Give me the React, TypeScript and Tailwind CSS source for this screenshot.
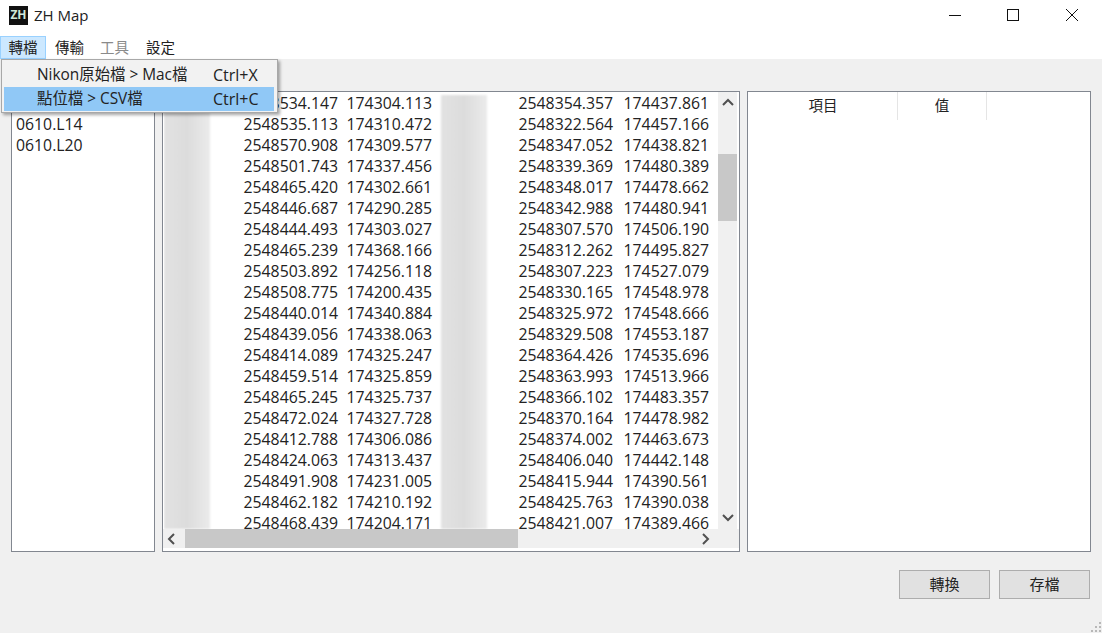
import React from "react";

const font = { fontFamily: '"Open Sans", "Noto Sans CJK TC", sans-serif' };

// 點位資料 (左右兩組座標)
const rows: string[][] = [
  ["2548534.147", "174304.113", "2548354.357", "174437.861"],
  ["2548535.113", "174310.472", "2548322.564", "174457.166"],
  ["2548570.908", "174309.577", "2548347.052", "174438.821"],
  ["2548501.743", "174337.456", "2548339.369", "174480.389"],
  ["2548465.420", "174302.661", "2548348.017", "174478.662"],
  ["2548446.687", "174290.285", "2548342.988", "174480.941"],
  ["2548444.493", "174303.027", "2548307.570", "174506.190"],
  ["2548465.239", "174368.166", "2548312.262", "174495.827"],
  ["2548503.892", "174256.118", "2548307.223", "174527.079"],
  ["2548508.775", "174200.435", "2548330.165", "174548.978"],
  ["2548440.014", "174340.884", "2548325.972", "174548.666"],
  ["2548439.056", "174338.063", "2548329.508", "174553.187"],
  ["2548414.089", "174325.247", "2548364.426", "174535.696"],
  ["2548459.514", "174325.859", "2548363.993", "174513.966"],
  ["2548465.245", "174325.737", "2548366.102", "174483.357"],
  ["2548472.024", "174327.728", "2548370.164", "174478.982"],
  ["2548412.788", "174306.086", "2548374.002", "174463.673"],
  ["2548424.063", "174313.437", "2548406.040", "174442.148"],
  ["2548491.908", "174231.005", "2548415.944", "174390.561"],
  ["2548462.182", "174210.192", "2548425.763", "174390.038"],
  ["2548468.439", "174204.171", "2548421.007", "174389.466"],
];

const Chevron = ({ d }: { d: string }) => (
  <svg width="12" height="12" viewBox="0 0 12 12" fill="none" stroke="#505050" strokeWidth="2">
    <path d={d} />
  </svg>
);

const TitleBar = () => (
  <div className="flex h-[30px] items-center bg-white">
    <div className="ml-[9px] flex h-[19px] w-[19px] items-center justify-center overflow-hidden bg-[#111] text-[12px] leading-none font-bold text-[#cfe8d8]">
      ZH
    </div>
    <span className="ml-[6px] text-[15px] text-[#222]">ZH Map</span>
    <div className="ml-auto flex h-full items-center">
      <svg width="14" height="14" viewBox="0 0 14 14" className="mr-[44px]" stroke="#111" fill="none">
        <path d="M1 7.5h12" />
      </svg>
      <svg width="14" height="14" viewBox="0 0 14 14" className="mr-[45px]" stroke="#111" fill="none">
        <rect x="1.5" y="1.5" width="11" height="11" />
      </svg>
      <svg width="14" height="14" viewBox="0 0 14 14" className="mr-[23px]" stroke="#111" fill="none">
        <path d="M1 1l12 12M13 1L1 13" />
      </svg>
    </div>
  </div>
);

const MenuBar = () => (
  <div className="flex h-[29px] items-start bg-white pt-[6px] text-[14.5px] text-[#222]">
    <div className="flex h-[23px] w-[46px] items-center justify-center border border-[#99d1ff] bg-[#cce8ff]">轉檔</div>
    <div className="ml-[9px] flex h-[23px] items-center">傳輸</div>
    <div className="ml-[16px] flex h-[23px] items-center text-[#8a8a8a]">工具</div>
    <div className="ml-[17px] flex h-[23px] items-center">設定</div>
  </div>
);

const FileMenu = () => (
  <div className="absolute top-[59px] left-[1px] z-10 h-[54px] w-[277px] border border-[#a8a8a8] bg-[#f2f2f2] pt-[2px] pr-[3px] pl-[2px] text-[15.4px] text-[#222] shadow-[2px_2px_3px_rgba(0,0,0,0.35)]">
    <div className="flex h-[25px] items-center pl-[33px]">
      <span className="w-[176px]">Nikon原始檔 &gt; Mac檔</span>
      <span className="text-[16px]">Ctrl+X</span>
    </div>
    <div className="flex h-[24px] items-center bg-[#90c8f6] pl-[33px]">
      <span className="w-[176px]">點位檔 &gt; CSV檔</span>
      <span className="text-[16px]">Ctrl+C</span>
    </div>
  </div>
);

const FileList = () => (
  <div className="h-[461px] w-[144px] shrink-0 border border-[#828790] bg-white pt-[1px] pl-[4px] text-[15.8px] leading-[21px] text-[#222]">
    <div className="h-[21px]" />
    <div>0610.L14</div>
    <div>0610.L20</div>
  </div>
);

const BlurBlock = ({ className }: { className: string }) => (
  <div
    className={`absolute bottom-0 w-[46px] bg-gradient-to-r from-[#e2e2e2] via-[#dcdcdc] to-[#ebebeb] blur-[1px] ${className}`}
  />
);

const DataTable = () => (
  <div className="ml-[7px] flex h-[461px] w-[578px] shrink-0 flex-col border border-[#828790] bg-white">
    <div className="flex h-[437px] pl-[1px]">
      <div className="relative w-[554px] overflow-hidden pt-[1px] text-[15.8px] leading-[21px] text-[#222]">
        <BlurBlock className="top-[20px] left-0" />
        <BlurBlock className="top-[3px] left-[277px]" />
        {rows.map((r) => (
          <div key={r[0]} className="relative flex h-[21px] whitespace-nowrap">
            <span className="w-[174px] text-right">{r[0]}</span>
            <span className="w-[94px] text-right">{r[1]}</span>
            <span className="w-[181px] text-right">{r[2]}</span>
            <span className="w-[96px] text-right">{r[3]}</span>
          </div>
        ))}
      </div>
      <div className="flex w-[19px] flex-col items-center bg-[#f0f0f0] pt-[5px]">
        <Chevron d="M1 8l5-5 5 5" />
        <div className="mt-[45px] h-[67px] w-full bg-[#c8c8c8]" />
        <div className="mt-auto mb-[6px]">
          <Chevron d="M1 4l5 5 5-5" />
        </div>
      </div>
    </div>
    <div className="flex h-[19px] items-center bg-[#f0f0f0] pl-[3px]">
      <Chevron d="M8 1L3 6l5 5" />
      <div className="ml-[7px] h-full w-[333px] bg-[#c8c8c8]" />
      <div className="ml-[181px]">
        <Chevron d="M4 1l5 5-5 5" />
      </div>
    </div>
  </div>
);

const PropertyTable = () => (
  <div className="ml-[7px] h-[461px] w-[344px] shrink-0 border border-[#828790] bg-white text-[14.5px] text-[#222]">
    <div className="flex h-[28px] pl-[1px]">
      <div className="flex w-[149px] items-center justify-center border-r border-[#e5e5e5]">項目</div>
      <div className="flex w-[89px] items-center justify-center border-r border-[#e5e5e5]">值</div>
    </div>
  </div>
);

const SizeGrip = () => (
  <svg width="12" height="12" viewBox="0 0 12 12" className="absolute right-0 bottom-0" fill="#b8b8b8">
    <rect x="9" y="1" width="2" height="2" />
    <rect x="5" y="5" width="2" height="2" />
    <rect x="9" y="5" width="2" height="2" />
    <rect x="1" y="9" width="2" height="2" />
    <rect x="5" y="9" width="2" height="2" />
    <rect x="9" y="9" width="2" height="2" />
  </svg>
);

export default function App() {
  return (
    <div className="relative flex h-[633px] w-[1102px] flex-col overflow-hidden bg-[#f0f0f0]" style={font}>
      <TitleBar />
      <MenuBar />
      <FileMenu />
      <div className="flex flex-1 flex-col pt-[32px] pl-[11px]">
        <div className="flex">
          <FileList />
          <DataTable />
          <PropertyTable />
        </div>
        <div className="mt-[18px] flex justify-end gap-[9px] pr-[12px] text-[15px] text-[#222]">
          <button className="h-[29px] w-[91px] border border-[#adadad] bg-[#e1e1e1]">轉換</button>
          <button className="h-[29px] w-[91px] border border-[#adadad] bg-[#e1e1e1]">存檔</button>
        </div>
      </div>
      <SizeGrip />
    </div>
  );
}
